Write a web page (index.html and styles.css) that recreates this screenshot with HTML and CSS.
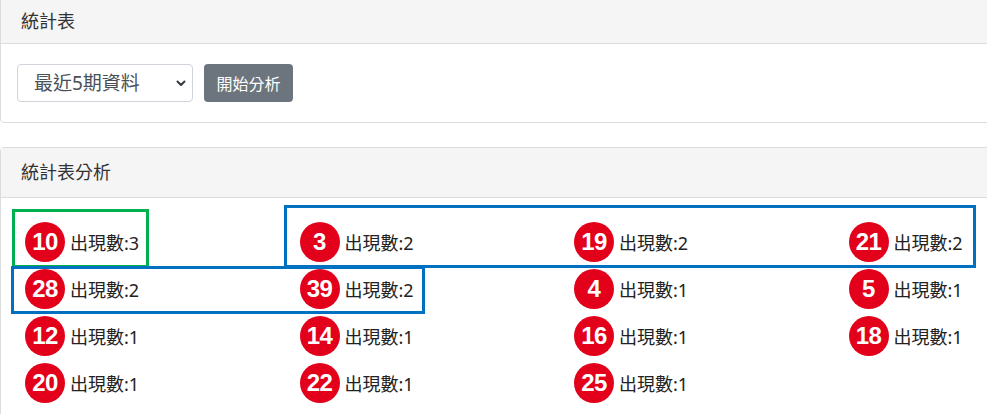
FILE: index.html
```html
<!DOCTYPE html>
<html>
    <head>
        <meta charset="utf-8">
        <link rel="stylesheet" href="styles.css">
    </head>
    <body>
        <div class="page">
            <div class="card card-top">
                <div class="card-header">統計表</div>
                <div class="card-body form-row">
                    <div class="select-wrap">
                        <select class="form-select">
                            <option>最近5期資料</option>
                            <option>最近10期資料</option>
                            <option>最近20期資料</option>
                        </select>
                        <svg class="chevron" width="10" height="8" viewBox="0 0 10 8"><path d="M1.5 2.5 L5 6 L8.5 2.5" fill="none" stroke="#343a40" stroke-width="2" stroke-linecap="round" stroke-linejoin="round"/></svg>
                    </div>
                    <button class="btn">開始分析</button>
                </div>
            </div>

            <div class="card">
                <div class="card-header">統計表分析</div>
                <div class="card-body">
                    <div class="ball-grid">
                        <div class="item"><span class="ball">10</span><span class="count">出現數:3</span></div>
                        <div class="item"><span class="ball">3</span><span class="count">出現數:2</span></div>
                        <div class="item"><span class="ball">19</span><span class="count">出現數:2</span></div>
                        <div class="item"><span class="ball">21</span><span class="count">出現數:2</span></div>
                        <div class="item"><span class="ball">28</span><span class="count">出現數:2</span></div>
                        <div class="item"><span class="ball">39</span><span class="count">出現數:2</span></div>
                        <div class="item"><span class="ball">4</span><span class="count">出現數:1</span></div>
                        <div class="item"><span class="ball">5</span><span class="count">出現數:1</span></div>
                        <div class="item"><span class="ball">12</span><span class="count">出現數:1</span></div>
                        <div class="item"><span class="ball">14</span><span class="count">出現數:1</span></div>
                        <div class="item"><span class="ball">16</span><span class="count">出現數:1</span></div>
                        <div class="item"><span class="ball">18</span><span class="count">出現數:1</span></div>
                        <div class="item"><span class="ball">20</span><span class="count">出現數:1</span></div>
                        <div class="item"><span class="ball">22</span><span class="count">出現數:1</span></div>
                        <div class="item"><span class="ball">25</span><span class="count">出現數:1</span></div>
                    </div>
                </div>
            </div>

            <!-- 標示框 -->
            <div class="mark mark-green"></div>
            <div class="mark mark-blue1"></div>
            <div class="mark mark-blue2"></div>
        </div>
    </body>
</html>
```

FILE: styles.css
```css
*{
    padding: 0;
    margin: 0;
    box-sizing: border-box;
}
html,body{
    overflow: hidden;
    background: #fff;
}
body{
    font-family: "Noto Sans", "Noto Sans CJK TC", sans-serif;
    color: #212529;
}
.page{
    position: relative;
    width: 1140px;
}
.card{
    border: 1px solid #dcdcdc;
    border-radius: 4px;
    background: #fff;
}
.card-top{
    margin-top: -7px;
    margin-bottom: 24px;
}
.card-header{
    height: 50px;
    padding: 0 20px;
    background-color: #f5f5f5;
    border-bottom: 1px solid #dcdcdc;
    font-size: 18px;
    line-height: 49px;
    color: #333;
}
.card-top .card-header{
    padding-top: 3px;
}
.card-body{
    padding: 20px;
}
.form-row{
    display: flex;
    gap: 11px;
    padding-left: 16px;
}
.select-wrap{
    position: relative;
    width: 176px;
    height: 38px;
}
.form-select{
    appearance: none;
    -webkit-appearance: none;
    width: 100%;
    height: 100%;
    border: 1px solid #ced4da;
    border-radius: 4px;
    background: #fff;
    padding-left: 16px;
    font-family: "Noto Sans", "Noto Sans CJK TC", sans-serif;
    font-size: 19px;
    color: #495057;
}
.chevron{
    position: absolute;
    right: 7px;
    top: 15px;
    pointer-events: none;
}
.btn{
    width: 89px;
    height: 38px;
    border: none;
    border-radius: 4px;
    background-color: #6c757d;
    color: #fff;
    font-family: "Noto Sans", "Noto Sans CJK TC", sans-serif;
    font-size: 16px;
}
.ball-grid{
    display: grid;
    grid-template-columns: repeat(4, 1fr);
    grid-auto-rows: 47px;
}
.item{
    display: flex;
    align-items: center;
    gap: 5px;
    padding-left: 4px;
}
.ball{
    width: 40px;
    height: 40px;
    border-radius: 50%;
    background-color: #e3001b;
    color: #fff;
    font-family: "Liberation Sans", Arial, sans-serif;
    font-weight: bold;
    font-size: 24px;
    line-height: 40px;
    text-align: center;
    letter-spacing: -0.5px;
}
.count{
    font-size: 18px;
    color: #222;
}
/* .page 被 card-top 的負 margin 往上帶了 7px */
.mark{
    position: absolute;
    border: 3px solid #0070c0;
}
.mark-green{
    border-color: #00b04f;
    left: 12px;
    top: 216px;
    width: 137px;
    height: 59px;
}
.mark-blue1{
    left: 284px;
    top: 212px;
    width: 692px;
    height: 63px;
}
.mark-blue2{
    left: 11px;
    top: 273px;
    width: 414px;
    height: 48px;
}
```
